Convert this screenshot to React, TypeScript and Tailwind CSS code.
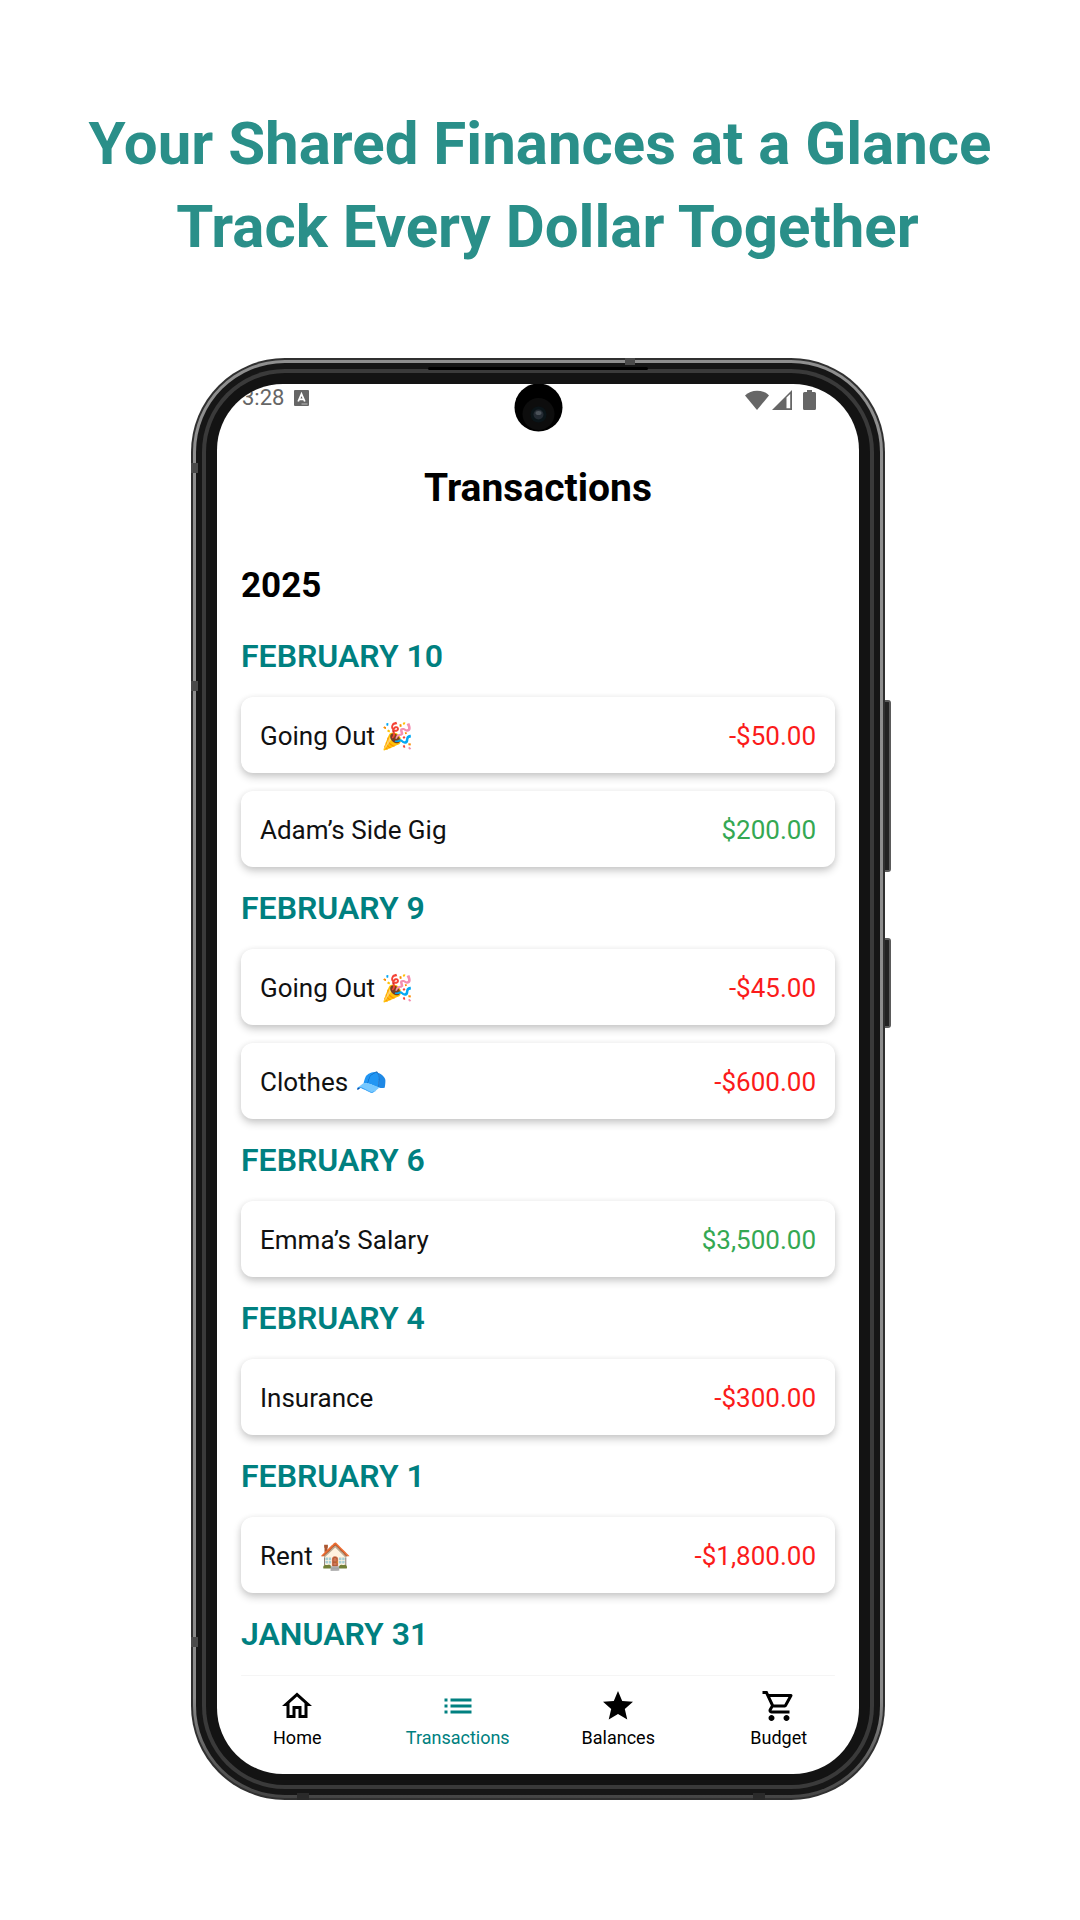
import { MdOutlineHome, MdList, MdStar, MdOutlineShoppingCart } from "react-icons/md";
import type { IconType } from "react-icons";

type Entry = { name: string; emoji?: string; amount: string };
type Day = { date: string; entries: Entry[] };

const days: Day[] = [
  {
    date: "FEBRUARY 10",
    entries: [
      { name: "Going Out", emoji: "🎉", amount: "-$50.00" },
      { name: "Adam’s Side Gig", amount: "$200.00" },
    ],
  },
  {
    date: "FEBRUARY 9",
    entries: [
      { name: "Going Out", emoji: "🎉", amount: "-$45.00" },
      { name: "Clothes", emoji: "🧢", amount: "-$600.00" },
    ],
  },
  { date: "FEBRUARY 6", entries: [{ name: "Emma’s Salary", amount: "$3,500.00" }] },
  { date: "FEBRUARY 4", entries: [{ name: "Insurance", amount: "-$300.00" }] },
  { date: "FEBRUARY 1", entries: [{ name: "Rent", emoji: "🏠", amount: "-$1,800.00" }] },
  { date: "JANUARY 31", entries: [] },
];

const tabs: { label: string; icon: IconType; active?: boolean }[] = [
  { label: "Home", icon: MdOutlineHome },
  { label: "Transactions", icon: MdList, active: true },
  { label: "Balances", icon: MdStar },
  { label: "Budget", icon: MdOutlineShoppingCart },
];

function StatusBar() {
  return (
    <div className="relative flex h-[82px] items-start justify-between pt-0.5 pr-[43px] pl-[25px] text-[#666666]">
      <div className="flex items-center gap-2.5">
        <span className="text-[22px] leading-6">3:28</span>
        <svg viewBox="0 0 15 16" className="h-4 w-[15px]" aria-hidden="true">
          <rect width="15" height="16" rx="1" fill="currentColor" />
          <path d="M4.2 11.5 7.5 4l3.3 7.5M5.4 9.3h4.2" fill="none" stroke="#fff" strokeWidth="1.8" />
          <path d="M7.5 14h6" stroke="#bbb" strokeWidth="1" />
        </svg>
      </div>
      <div className="flex items-end gap-[3px] pt-1">
        <svg viewBox="0 0 24 20" className="h-5 w-6" aria-hidden="true">
          <path d="M0 5.5C6-1 18-1 24 5.5L12 20Z" fill="currentColor" />
        </svg>
        <svg viewBox="0 0 20 20" className="h-5 w-5" aria-hidden="true">
          <path d="M0 20 20 0v20ZM14.5 7.5v10.8h3.7V4Z" fill="currentColor" fillRule="evenodd" />
        </svg>
        <svg viewBox="0 0 13 20" className="ml-2 h-5 w-[13px]" aria-hidden="true">
          <path d="M4 0h5v2h2.500A1.500 1.500 0 0 1 13 3.500V18.500A1.500 1.500 0 0 1 11.500 20h-10A1.500 1.500 0 0 1 0 18.500V3.500A1.500 1.500 0 0 1 1.500 2H4Z" fill="currentColor" />
        </svg>
      </div>
      <div className="absolute inset-x-0 top-0 flex justify-center">
        <svg viewBox="0 0 50 48" className="h-12 w-[50px]" aria-hidden="true">
          <circle cx="25.5" cy="23.5" r="24" fill="#000" />
          <circle cx="25.5" cy="30" r="16" fill="#0d0d0d" />
          <circle cx="25.5" cy="30.5" r="8" fill="#0a1418" />
          <circle cx="25.5" cy="30.5" r="5" fill="#242b33" />
          <ellipse cx="25.5" cy="29" rx="3" ry="2" fill="#4b5259" />
        </svg>
      </div>
    </div>
  );
}

function Row({ entry }: { entry: Entry }) {
  const negative = entry.amount.startsWith("-");
  return (
    <li className="flex h-[76px] items-center justify-between rounded-xl bg-white px-[19px] pt-0.5 text-[26px] shadow-[0_4px_8px_rgba(0,0,0,0.2),0_1px_6px_rgba(0,0,0,0.06)]">
      <span className="text-[#111111]">
        {entry.name}
        {entry.emoji && <span> {entry.emoji}</span>}
      </span>
      <span className={negative ? "text-[#fb1b1b]" : "text-[#34a853]"}>{entry.amount}</span>
    </li>
  );
}

function Screen() {
  return (
    <div className="overflow-hidden rounded-[66px] bg-white">
      <StatusBar />
      <h2 className="text-center text-[39px] leading-[44px] font-bold text-black">Transactions</h2>
      <main className="px-6 pt-14">
        <h3 className="mb-[27px] text-[35px] leading-10 font-bold text-black">2025</h3>
        {days.map((day) => (
          <section key={day.date}>
            <h4 className="pt-[3px] pb-[21px] text-[32px] leading-10 font-semibold text-[#008080]">{day.date}</h4>
            <ul className="flex flex-col gap-[18px] not-empty:pb-[18px]">
              {day.entries.map((entry) => (
                <Row key={entry.name} entry={entry} />
              ))}
            </ul>
          </section>
        ))}
        <div className="h-px rounded-full bg-[#f5f5f5]" />
      </main>
      <nav className="grid grid-cols-4 pt-3 pb-6">
        {tabs.map(({ label, icon: Icon, active }) => (
          <button
            key={label}
            type="button"
            className={
              active
                ? "flex flex-col items-center gap-0.5 text-[#008080]"
                : "flex flex-col items-center gap-0.5 text-black"
            }
          >
            <Icon className="size-9" aria-hidden="true" />
            <span className="text-[18px] leading-6">{label}</span>
          </button>
        ))}
      </nav>
    </div>
  );
}

function Phone() {
  return (
    <div className="relative mx-auto w-full max-w-[698px] pr-1">
      <div className="absolute top-[342px] right-[-2px] h-[172px] w-2 rounded-r-[3px] border-y-2 border-r-2 border-[#5b5b5b] bg-[#222222]" />
      <div className="absolute top-[580px] right-[-2px] h-[90px] w-2 rounded-r-[3px] border-y-2 border-r-2 border-[#5b5b5b] bg-[#222222]" />
      <div className="relative rounded-[94px] bg-[#303030] p-0.5">
        <div className="rounded-[92px] bg-linear-to-b from-[#8f8f8f] via-[#8a8a8a] via-93% to-[#444444] p-[3px]">
          <div className="rounded-[89px] bg-[#161616] p-1.5">
            <div className="rounded-[83px] bg-[#3a3a3a] p-1">
              <div className="rounded-[79px] bg-[#131313] p-[11px]">
                <Screen />
              </div>
            </div>
          </div>
        </div>
        {/* Earpiece slit along the top edge */}
        <div className="absolute inset-x-0 top-[9px] flex justify-center">
          <div className="h-[3px] w-[220px] rounded-full bg-black" />
        </div>
        {/* Antenna breaks in the metal frame */}
        <div className="absolute top-0 left-[434px] h-[7px] w-2.5 bg-[#4a4a4a]" />
        <div className="absolute top-[105px] left-0 h-2.5 w-[7px] bg-[#4a4a4a]" />
        <div className="absolute top-[323px] left-0 h-2.5 w-[7px] bg-[#4a4a4a]" />
        <div className="absolute bottom-[153px] left-0 h-2.5 w-[7px] bg-[#4a4a4a]" />
        <div className="absolute bottom-0 left-[106px] h-[7px] w-3 bg-[#2a2a2a]" />
        <div className="absolute right-[120px] bottom-0 h-[7px] w-3 bg-[#2a2a2a]" />
      </div>
    </div>
  );
}

export default function App() {
  return (
    <div className="min-h-screen bg-white px-4 pt-[102px] pb-[118px] font-[Roboto,sans-serif]">
      <h1 className="mb-[90px] text-center text-[60px] leading-[83px] font-bold text-[#2a8f89]">
        Your Shared Finances at a Glance
        <br />
        &nbsp;Track Every Dollar Together
      </h1>
      <Phone />
    </div>
  );
}
